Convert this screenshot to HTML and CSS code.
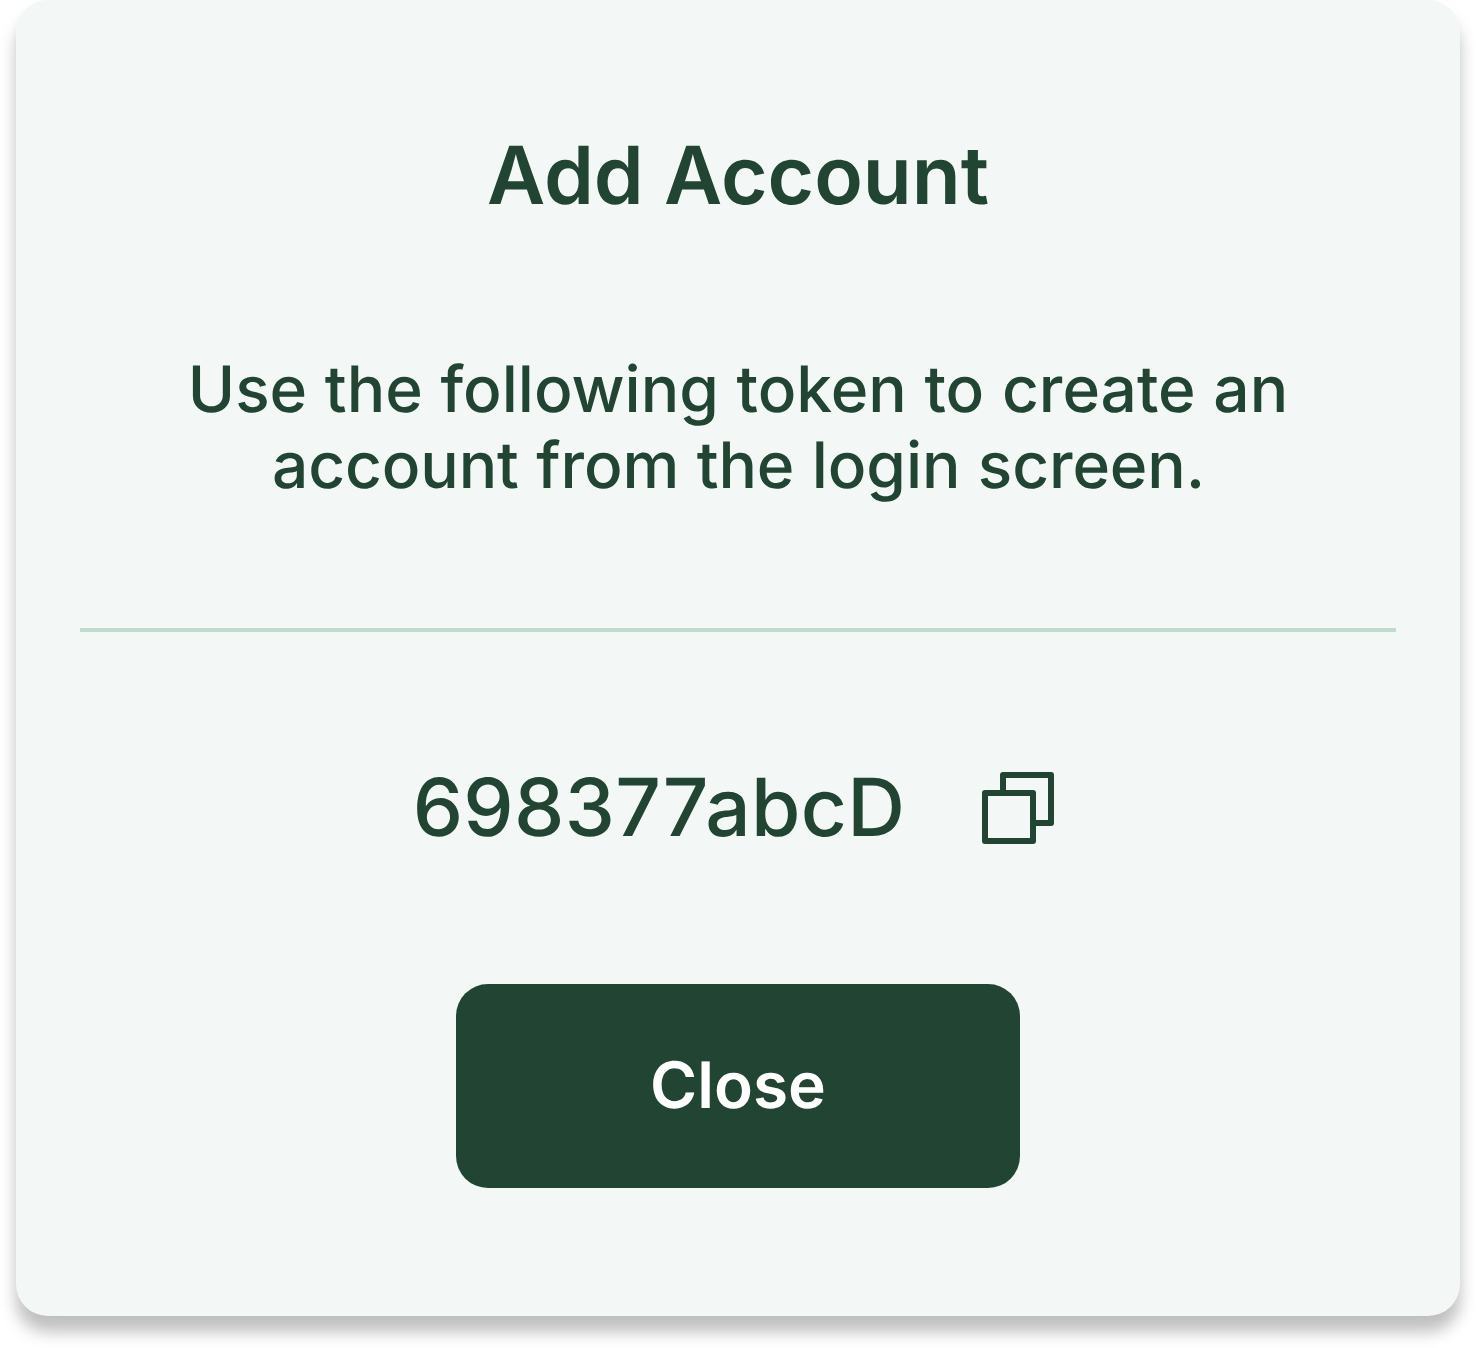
FILE: index.html
```html
<!DOCTYPE html>
<html lang="en">
<head>
<meta charset="utf-8">
<title>Add Account</title>
<link rel="stylesheet" href="styles.css">
</head>
<body>
<main class="dialog">
  <h1 class="title">Add Account</h1>
  <p class="message">
    <span class="message-lead">Use the following token to create an</span><br>
    <span class="message-rest">account from the login screen.</span>
  </p>
  <hr class="divider">
  <div class="token-row">
    <span class="token">698377abcD</span>
    <svg class="copy-icon" viewBox="0 0 72 72" fill="none" stroke="currentColor" stroke-width="6" stroke-linejoin="round" aria-label="Copy" role="img">
      <path d="M21 21V3H69V51H51"/>
      <rect x="3" y="21" width="48" height="48"/>
    </svg>
  </div>
  <button class="close-button" type="button">Close</button>
</main>
</body>
</html>
```

FILE: styles.css
```css
* {
  box-sizing: border-box;
}

body {
  margin: 0;
  background: #fff;
  color: #224433;
  font-family: Inter, sans-serif;
  text-rendering: geometricPrecision;
  overflow: hidden;
}

.dialog {
  display: flex;
  flex-direction: column;
  align-items: center;
  height: 1316px;
  margin: 0 16px 32px;
  padding: 127px 64px 128px;
  border-radius: 32px;
  background: #f3f7f5;
  box-shadow: 0 16px 16px rgba(0, 0, 0, 0.25);
}

.title {
  margin: 0;
  font-size: 80px;
  font-weight: 600;
  line-height: 97px;
}

.message {
  margin: 128px 0 0;
  font-size: 64px;
  font-weight: 500;
  line-height: 76px;
  text-align: center;
  white-space: nowrap;
}

.message-lead {
  word-spacing: 0.6px;
}

.message-rest {
  margin-left: 1px;
  letter-spacing: -0.12px;
  word-spacing: 0.6px;
}

.divider {
  width: 100%;
  height: 4px;
  margin: 124px 0 0;
  border: 0;
  background: #c1dbcd;
}

.token-row {
  display: flex;
  align-items: center;
  gap: 77px;
  margin: 127px 5px 0 0;
}

.token {
  margin-left: -4px;
  font-size: 80px;
  font-weight: 500;
  line-height: 97px;
  letter-spacing: 0.33px;
}

.copy-icon {
  width: 72px;
  height: 72px;
  margin-top: 1px;
}

.close-button {
  width: 564px;
  height: 204px;
  margin-top: 128px;
  padding: 0 0 2px;
  border: 0;
  border-radius: 32px;
  background: #224433;
  color: #fff;
  font: 600 64px/77px Inter, sans-serif;
  text-rendering: geometricPrecision;
}
```
